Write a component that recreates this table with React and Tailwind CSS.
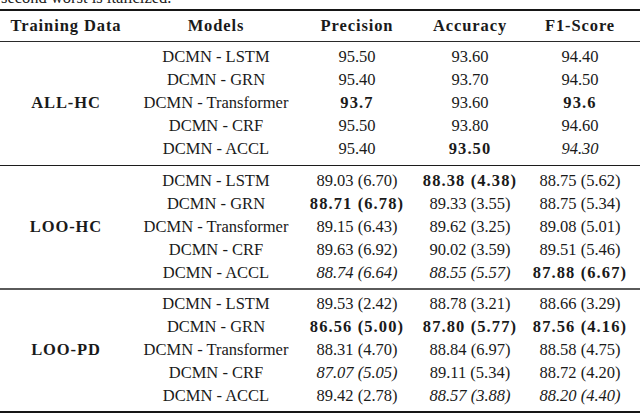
import React from 'react';

const groups = [
  {
    name: 'ALL-HC',
    line: 'h-px bg-[#1c1c1c]',
    pad: 'pt-[4px] pb-[4px]',
    rows: [
      ['DCMN - LSTM', ['95.50'], ['93.60'], ['94.40']],
      ['DCMN - GRN', ['95.40'], ['93.70'], ['94.50']],
      ['DCMN - Transformer', ['93.7', 'b'], ['93.60'], ['93.6', 'b']],
      ['DCMN - CRF', ['95.50'], ['93.80'], ['94.60']],
      ['DCMN - ACCL', ['95.40'], ['93.50', 'b'], ['94.30', 'i']],
    ],
  },
  {
    name: 'LOO-HC',
    line: 'h-[2px] bg-[#5a5a5a]',
    pad: 'pt-[4px] pb-[3px]',
    rows: [
      ['DCMN - LSTM', ['89.03 (6.70)'], ['88.38 (4.38)', 'b'], ['88.75 (5.62)']],
      ['DCMN - GRN', ['88.71 (6.78)', 'b'], ['89.33 (3.55)'], ['88.75 (5.34)']],
      ['DCMN - Transformer', ['89.15 (6.43)'], ['89.62 (3.25)'], ['89.08 (5.01)']],
      ['DCMN - CRF', ['89.63 (6.92)'], ['90.02 (3.59)'], ['89.51 (5.46)']],
      ['DCMN - ACCL', ['88.74 (6.64)', 'i'], ['88.55 (5.57)', 'i'], ['87.88 (6.67)', 'b']],
    ],
  },
  {
    name: 'LOO-PD',
    line: 'h-[2px] bg-[#161616]',
    pad: 'pt-[3px] pb-[3px]',
    rows: [
      ['DCMN - LSTM', ['89.53 (2.42)'], ['88.78 (3.21)'], ['88.66 (3.29)']],
      ['DCMN - GRN', ['86.56 (5.00)', 'b'], ['87.80 (5.77)', 'b'], ['87.56 (4.16)', 'b']],
      ['DCMN - Transformer', ['88.31 (4.70)'], ['88.84 (6.97)'], ['88.58 (4.75)']],
      ['DCMN - CRF', ['87.07 (5.05)', 'i'], ['89.11 (5.34)'], ['88.72 (4.20)']],
      ['DCMN - ACCL', ['89.42 (2.78)'], ['88.57 (3.88)', 'i'], ['88.20 (4.40)', 'i']],
    ],
  },
];

const cols = 'grid grid-cols-[132px_168px_114px_112px_108px]';

function Cell({ v }) {
  const [text, style] = v;
  const cls = style === 'b' ? 'font-bold tracking-[1.1px]' : style === 'i' ? 'italic' : '';
  return <div className={`text-center whitespace-nowrap ${cls}`}>{text}</div>;
}

export default function App() {
  return (
    <div className="w-[640px] h-[414px] overflow-hidden bg-white text-[#1a1a1a] text-[16.5px] font-['Liberation_Serif',serif]">
      {/* caption, cut at the top */}
      <div className="h-[9px] overflow-hidden">
        <div className="-mt-[11px] leading-[18px] pl-[1px]">second worst is italicized.</div>
      </div>
      <div className="h-[2px] bg-[#161616]" />
      <div className={`${cols} h-[30px] items-center font-bold tracking-[0.9px]`}>
        <div className="text-center">Training Data</div>
        <div className="text-center">Models</div>
        <div className="text-center">Precision</div>
        <div className="text-center">Accuracy</div>
        <div className="text-center">F1-Score</div>
      </div>
      <div className="h-px bg-[#2a2a2a]" />
      {groups.map((g) => (
        <div key={g.name}>
          <div className={`${cols} ${g.pad} items-center`}>
            <div className="row-span-5 text-center font-bold tracking-[0.9px]">{g.name}</div>
            {g.rows.map((r) => (
              <React.Fragment key={r[0]}>
                <div className="h-[23px] flex items-center justify-center whitespace-nowrap">{r[0]}</div>
                <div className="h-[23px] flex items-center justify-center"><Cell v={r[1]} /></div>
                <div className="h-[23px] flex items-center justify-center"><Cell v={r[2]} /></div>
                <div className="h-[23px] flex items-center justify-center"><Cell v={r[3]} /></div>
              </React.Fragment>
            ))}
          </div>
          <div className={g.line} />
        </div>
      ))}
    </div>
  );
}
